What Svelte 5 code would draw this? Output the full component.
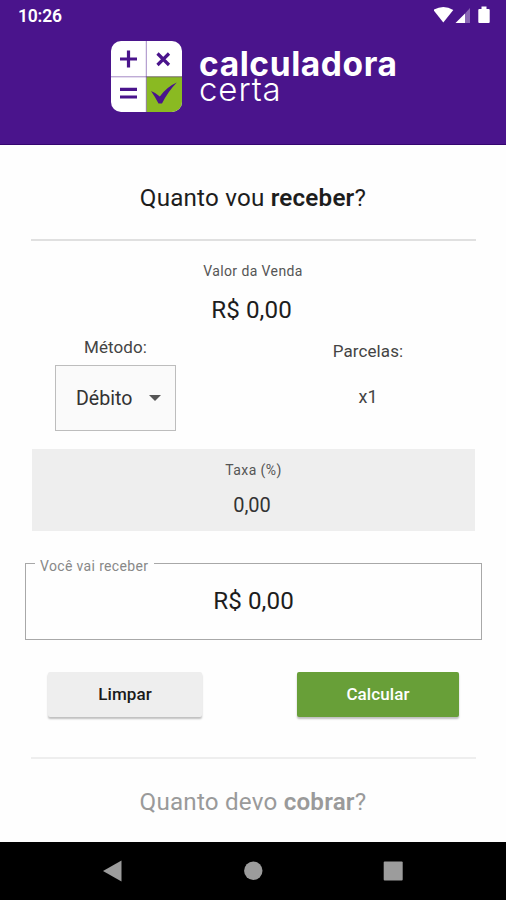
<script lang="ts">
  let method = $state("Débito");
  let installments = $state(1);
  let amount = $state(0);
  let rate = $state(0);
  let received = $state(0);

  function format(value: number) {
    return value.toFixed(2).replace(".", ",");
  }

  function clear() {
    amount = 0;
    rate = 0;
    received = 0;
    installments = 1;
    method = "Débito";
  }

  function calculate() {
    received = amount * (1 - rate / 100);
  }
</script>

<div class="screen">
  <header>
    <div class="status">
      <span class="clock">10:26</span>
      <svg class="status-icons" width="58" height="18" viewBox="0 0 58 18" fill="#fff">
        <path d="M-0.7 4 Q9.3 -2 19.3 4 L9.3 16.5 Z" />
        <path d="M21.5 17 L31 7.5 V17 Z" />
        <path d="M31 7.5 L36 2 V17 H31 Z" opacity="0.35" />
        <path d="M45.3 3 H47.5 V0.5 H52.5 V3 H54.7 Q55.7 3 55.7 4 V16 Q55.7 17 54.7 17 H45.3 Q44.3 17 44.3 16 V4 Q44.3 3 45.3 3 Z" />
      </svg>
    </div>
    <div class="brand">
      <svg class="logo" width="71" height="71" viewBox="0 0 71 71">
        <rect width="71" height="71" rx="10" fill="#fff" />
        <path d="M35.5 35.5 H71 V61 A10 10 0 0 1 61 71 H35.5 Z" fill="#8aba22" />
        <path d="M35.3 0 V71 M0 35.8 H71" stroke="#4a148c" stroke-opacity="0.5" stroke-width="1" />
        <g stroke="#4a148c" stroke-width="3.2" fill="none">
          <path d="M9 18 H26 M17.5 9.5 V26.5" />
          <path d="M46.5 12.5 L58 24 M58 12.5 L46.5 24" />
          <path d="M9 48.3 H26 M9 56 H26" />
        </g>
        <path d="M40 50 Q45.5 52 48.8 55.6 Q55.5 46 65.8 41.5 Q57 50.5 51 62.5 L47.5 62.5 Q44.5 56.5 40 50 Z" fill="#4a148c" />
      </svg>
      <div class="wordmark">
        <span class="word-bold">calculadora</span>
        <span class="word-light">certa</span>
      </div>
    </div>
  </header>

  <main>
    <h1 class="heading">Quanto vou <b>receber</b>?</h1>
    <hr />

    <div class="sale">
      <span class="caption">Valor da Venda</span>
      <span class="money">R$ {format(amount)}</span>
    </div>

    <div class="options">
      <div class="method">
        <span class="option-label">Método:</span>
        <button class="select">
          <span>{method}</span>
          <svg width="12" height="6" viewBox="0 0 12 6"><path d="M0 0 H12 L6 6 Z" fill="#555" /></svg>
        </button>
      </div>
      <div class="installments">
        <span class="option-label">Parcelas:</span>
        <span class="count">x{installments}</span>
      </div>
    </div>

    <div class="rate">
      <span class="caption">Taxa (%)</span>
      <span class="rate-value">{format(rate)}</span>
    </div>

    <fieldset>
      <legend>Você vai receber</legend>
      <span class="money">R$ {format(received)}</span>
    </fieldset>

    <div class="actions">
      <button class="btn" onclick={clear}>Limpar</button>
      <button class="btn primary" onclick={calculate}>Calcular</button>
    </div>

    <hr class="lower" />
    <h2 class="heading muted">Quanto devo <b>cobrar</b>?</h2>
  </main>

  <nav>
    <svg width="20" height="22" viewBox="0 0 20 22"><path d="M0 11 L18.5 0.5 V21.5 Z" /></svg>
    <svg width="20" height="20" viewBox="0 0 20 20"><circle cx="10.3" cy="9.8" r="9.2" /></svg>
    <svg width="20" height="20" viewBox="0 0 20 20"><rect x="0.7" y="0.5" width="19" height="19" rx="1" /></svg>
  </nav>
</div>

<style>
  :global(body) {
    margin: 0;
  }

  .screen {
    display: flex;
    flex-direction: column;
    width: 506px;
    height: 900px;
    overflow: hidden;
    background: #fefefe;
    color: #1d1d1d;
    font-family: Roboto, "Liberation Sans", sans-serif;
  }

  header {
    flex: none;
    box-sizing: border-box;
    height: 145px;
    background: #4a148c;
    border-bottom: 1px solid #35066f;
    color: #fff;
  }

  .status {
    display: flex;
    justify-content: space-between;
    align-items: center;
    box-sizing: border-box;
    height: 32px;
    padding: 0 14px 0 18px;
  }

  .clock {
    font-size: 17.5px;
    font-weight: 600;
    line-height: 20px;
    letter-spacing: -0.2px;
  }

  .status-icons {
    margin-bottom: 2px;
  }

  .brand {
    display: flex;
    gap: 17px;
    padding: 9px 0 0 111px;
  }

  .wordmark {
    display: flex;
    flex-direction: column;
    padding-top: 8px;
    font-family: Inter, "Open Sans", sans-serif;
  }

  .word-bold {
    font-size: 33.5px;
    font-weight: 700;
    line-height: 31px;
    letter-spacing: 0.6px;
  }

  .word-light {
    font-size: 33px;
    font-weight: 300;
    line-height: 18px;
    letter-spacing: 0.9px;
  }

  main {
    flex: 1;
    display: flex;
    flex-direction: column;
    min-height: 0;
  }

  .heading {
    margin: 38px 0 26px;
    font-size: 24.2px;
    font-weight: 400;
    line-height: 30px;
    letter-spacing: 0.2px;
    text-align: center;
  }

  .heading b {
    font-weight: 600;
  }

  .muted {
    margin: 28px 0 0;
    color: #9a9a9a;
  }

  hr {
    width: 445px;
    height: 2px;
    margin: 0 30px 0 31px;
    border: 0;
    background: #e0e0e0;
  }

  .sale {
    display: flex;
    flex-direction: column;
    align-items: center;
    padding-top: 20px;
  }

  .caption {
    color: #555;
    font-size: 14px;
    line-height: 20px;
    letter-spacing: 0.4px;
  }

  .money {
    margin-top: 14px;
    font-size: 24.2px;
    line-height: 30px;
    letter-spacing: 0.1px;
  }

  .sale .money {
    margin-right: 3px;
  }

  .options {
    display: flex;
    justify-content: space-between;
    padding: 12px 76px 0 55px;
  }

  .method,
  .installments {
    display: flex;
    flex-direction: column;
    align-items: center;
  }

  .installments {
    width: 124px;
    padding-top: 4px;
  }

  .method {
    width: 121px;
  }

  .option-label {
    color: #444;
    font-size: 17px;
    line-height: 20px;
    letter-spacing: 0.1px;
  }

  .select {
    display: flex;
    justify-content: space-between;
    align-items: center;
    box-sizing: border-box;
    width: 121px;
    height: 66px;
    margin-top: 8px;
    padding: 0 14px 0 20px;
    border: 1px solid #bdbdbd;
    background: #fafafa;
    color: #333;
    font: inherit;
    font-size: 19.6px;
  }

  .count {
    margin-top: 25px;
    color: #444;
    font-size: 18px;
    line-height: 22px;
  }

  .rate {
    display: flex;
    flex-direction: column;
    align-items: center;
    box-sizing: border-box;
    height: 82px;
    margin: 18px 31px 0 32px;
    padding-top: 11px;
    background: #eee;
  }

  .rate-value {
    margin: 13px 3px 0 0;
    color: #333;
    font-size: 20px;
    line-height: 24px;
  }

  fieldset {
    display: flex;
    justify-content: center;
    box-sizing: border-box;
    height: 90px;
    margin: 19px 24px 0 25px;
    padding: 0;
    border: 1px solid #a8a8a8;
  }

  /* extra top padding lets the label hang slightly below the outline */
  legend {
    margin-left: 9px;
    padding: 6px 6px 0 5px;
    color: #888;
    font-size: 14px;
    line-height: 20px;
    letter-spacing: 0.35px;
  }

  fieldset .money {
    margin-top: 10px;
  }

  .actions {
    display: flex;
    justify-content: space-between;
    padding: 32px 47px 0 48px;
  }

  .btn {
    width: 154px;
    height: 45px;
    padding: 0 0 1px;
    border: 0;
    border-radius: 2px;
    background: #eee;
    box-shadow: 0 2px 2px rgba(0, 0, 0, 0.25);
    color: #1a1a1a;
    font: inherit;
    font-size: 17px;
    font-weight: 500;
    letter-spacing: 0.1px;
  }

  .primary {
    width: 162px;
    background: #689f38;
    color: #fff;
  }

  .lower {
    margin-top: 40px;
    background: #eee;
  }

  nav {
    flex: none;
    display: flex;
    justify-content: space-between;
    align-items: center;
    box-sizing: border-box;
    height: 58px;
    padding: 0 103px;
    background: #000;
    fill: #9c9c9c;
  }
</style>
